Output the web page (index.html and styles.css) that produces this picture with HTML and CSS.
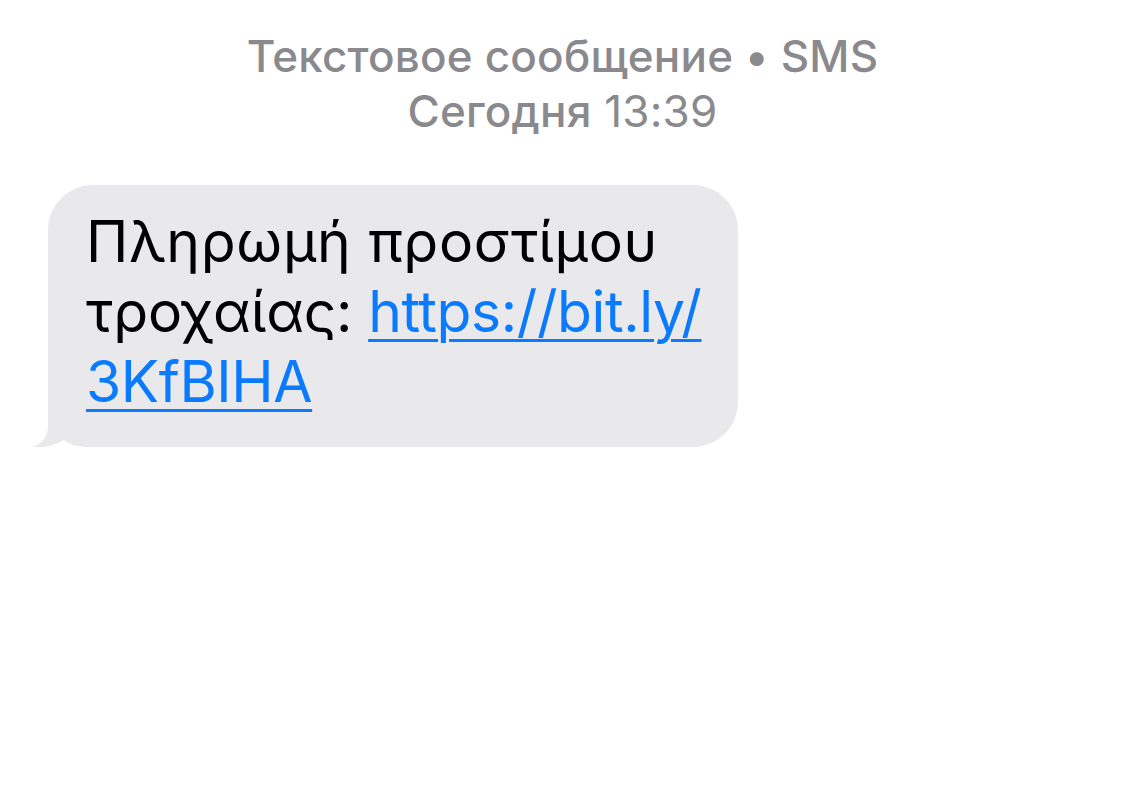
FILE: index.html
```html
<!DOCTYPE html>
<html lang="el">
<head>
<meta charset="utf-8">
<title>SMS</title>
<link rel="stylesheet" href="styles.css">
</head>
<body>
<div class="thread">
  <header class="meta">
    <div class="meta-line meta-kind">Текстовое сообщение • SMS</div>
    <div class="meta-line"><span class="meta-day">Сегодня</span> <span class="meta-time">13:39</span></div>
  </header>
  <div class="bubble">
    <svg class="tail" width="80" height="50" viewBox="0 0 80 50" aria-hidden="true">
      <path d="M20 0 L20 28 C20 40 14 47 4 50 C16 51 28 48 36 43 C42 48 50 50 62 50 L80 50 L80 0 Z" fill="#e9e9eb"/>
    </svg>
    <p class="bubble-text"><span class="line-wide">Πληρωμή προστίμου</span><br>τροχαίας: <a class="link" href="#">https://bit.ly/<br>3KfBIHA</a></p>
  </div>
</div>
</body>
</html>
```

FILE: styles.css
```css
html, body {
  margin: 0;
  padding: 0;
  background: #ffffff;
}

body {
  font-family: Inter, "Liberation Sans", sans-serif;
  width: 1125px;
  height: 790px;
  overflow: hidden;
}

.thread {
  display: flex;
  flex-direction: column;
  padding-top: 29px;
}

.meta {
  display: flex;
  flex-direction: column;
  align-items: center;
  color: #8a8a8e;
  font-size: 44px;
  line-height: 55px;
  letter-spacing: 0.2px;
}

.meta-kind,
.meta-day {
  font-weight: 500;
}

.meta-time {
  font-weight: 400;
}

.bubble {
  position: relative;
  align-self: flex-start;
  box-sizing: border-box;
  width: 690px;
  margin: 46px 0 0 48px;
  padding: 22px 20px 30px 38px;
  background: #e9e9eb;
  border-radius: 45px;
}

.tail {
  position: absolute;
  left: -20px;
  bottom: 0;
  display: block;
}

.bubble-text {
  position: relative;
  margin: 0;
  font-size: 57px;
  line-height: 70px;
  letter-spacing: -0.2px;
  color: #000000;
  white-space: nowrap;
}

.line-wide {
  letter-spacing: 0.7px;
}

.link {
  color: #0a7aff;
  letter-spacing: -0.4px;
  text-decoration: underline;
  text-decoration-thickness: 3px;
  text-underline-offset: 7px;
}
```
